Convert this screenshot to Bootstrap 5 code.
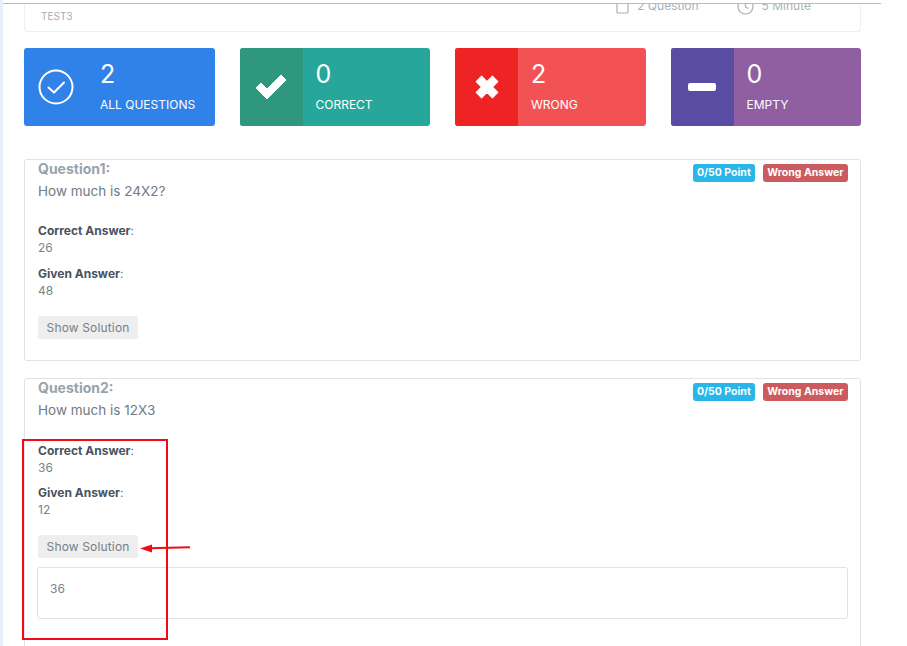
<!DOCTYPE html>
<html lang="en">
<head>
    <meta charset="UTF-8">
    <meta name="viewport" content="width=device-width, initial-scale=1.0">
    <title>Exam Result</title>
    <link href="https://cdn.jsdelivr.net/npm/bootstrap@5.3.0/dist/css/bootstrap.min.css" rel="stylesheet">
    <style>
        html, body {
            height: 646px;
            overflow: hidden;
        }
        body {
            background: #fff;
            font-family: Inter, "Open Sans", sans-serif;
            font-size: 13px;
            color: #6c757d;
            position: relative;
        }
        .side-strip {
            width: 3px;
            height: 646px;
            background: #e9effb;
            flex-shrink: 0;
        }
        .page-area {
            width: 878px;
            height: 646px;
            padding-top: 3px;
        }
        .top-rule {
            border-top: 1px solid #b9bbbd;
            height: 643px;
            overflow: hidden;
            padding: 0 20px 0 21px;
        }
        .exam-head {
            height: 28px;
            border: 1px solid #eceff3;
            border-top: 0;
            border-radius: 0 0 4px 4px;
            padding: 5px 49px 0 16px;
            font-size: 10px;
            color: #a5acb2;
        }
        .exam-meta {
            margin-top: -12px;
            font-size: 12px;
            color: #a9b1b7;
            line-height: 16px;
            gap: 38px;
        }
        .meta-item {
            gap: 8px;
            height: 18px;
        }
        .stat-row {
            margin-top: 16px;
            gap: 25px;
        }
        .stat-box {
            flex: 1 1 0;
            height: 78px;
            border-radius: 3px;
            color: #fff;
            overflow: hidden;
        }
        .stat-icon {
            width: 63px;
            flex-shrink: 0;
        }
        .stat-text {
            padding: 11px 0 0 13px;
        }
        .stat-num {
            font-size: 25px;
            line-height: 30px;
        }
        .stat-label {
            font-size: 12px;
            line-height: 16px;
            margin-top: 8px;
        }
        .tone-blue { background: #3082e8; }
        .tone-green { background: #27a79b; }
        .tone-green .stat-icon { background: #2e977d; }
        .tone-red { background: #f35254; }
        .tone-red .stat-icon { background: #ee2324; }
        .tone-purple { background: #8f5fa1; }
        .tone-purple .stat-icon { background: #5a4ca2; }
        .question-box {
            border: 1px solid #dde3ea;
            border-radius: 3px;
            padding: 0 12px 0 13px;
            background: #fff;
        }
        .q-first {
            margin-top: 33px;
            height: 202px;
        }
        .q-second {
            margin-top: 17px;
            height: 300px;
        }
        .q-title {
            font-size: 14px;
            line-height: 18px;
            font-weight: 700;
            color: #98a4aa;
        }
        .q-text {
            font-size: 13.5px;
            line-height: 20px;
            margin-top: -1px;
            margin-bottom: 21px;
            color: #6f7a82;
        }
        .q-second .q-text {
            margin-bottom: 22px;
        }
        .q-tags {
            padding-top: 4px;
            gap: 8px;
        }
        .q-tag {
            font-size: 10.5px;
            line-height: 18px;
            height: 18px;
            font-weight: 700;
            color: #fff;
            padding: 0 4px;
            border-radius: 3px;
        }
        .tag-info { background: #29b6e8; }
        .tag-danger { background: #cc5b60; padding: 0 4.5px; }
        .ans-label {
            font-size: 12px;
            line-height: 17px;
            color: #6f7a82;
        }
        .ans-label b {
            font-weight: 700;
            color: #47525e;
        }
        .ans-value {
            font-size: 12px;
            line-height: 17px;
            margin-bottom: 9px;
            color: #78838b;
        }
        .q-second .first-value {
            margin-bottom: 8px;
        }
        .ans-value.given-blue { color: #6f8296; }
        .btn-solution {
            background: #eeeeee;
            color: #767f86;
            font-size: 12px;
            letter-spacing: .15px;
            line-height: 16px;
            padding: 3px 8px;
            height: 23px;
            width: 100px;
            border: 0;
            border-radius: 2px;
            margin-top: 17px;
            display: block;
            white-space: nowrap;
        }
        .solution-box {
            margin-top: 9px;
            margin-left: -1px;
            height: 52px;
            border: 1px solid #dde3ea;
            border-radius: 3px;
            padding: 12px;
            font-size: 12px;
            line-height: 17px;
            color: #78838b;
        }
        .note-rect {
            position: absolute;
            left: 22px;
            top: 439px;
            width: 146px;
            height: 201px;
            border: 2px solid #f40a14;
        }
        .note-arrow {
            position: absolute;
            left: 138px;
            top: 542px;
        }
    </style>
</head>
<body>
    <div class="d-flex">
        <div class="side-strip"></div>
        <div class="page-area">
            <div class="top-rule">
                <div class="exam-head d-flex justify-content-between">
                    <div>TEST3</div>
                    <div class="exam-meta d-flex">
                        <span class="meta-item d-flex align-items-center">
                            <svg width="13" height="16" viewBox="0 0 13 16" fill="none" stroke="#a9b1b7" stroke-width="1.2"><rect x="1" y="1" width="11" height="14" rx="1"/></svg>
                            2 Question
                        </span>
                        <span class="meta-item d-flex align-items-center">
                            <svg width="17" height="17" viewBox="0 0 17 17" fill="none" stroke="#a9b1b7" stroke-width="1.2"><circle cx="8.5" cy="8.5" r="7.5"/><path d="M8.5 4v5l3 1.5"/></svg>
                            5 Minute
                        </span>
                    </div>
                </div>

                <div class="stat-row d-flex">
                    <div class="stat-box tone-blue d-flex">
                        <div class="stat-icon d-flex align-items-center justify-content-center">
                            <svg width="36" height="36" viewBox="0 0 36 36" fill="none" stroke="#fff" stroke-width="2"><circle cx="18" cy="18" r="16.5"/><path d="M10.5 18.5l5.5 5 10-10" stroke-linecap="round" stroke-linejoin="round"/></svg>
                        </div>
                        <div class="stat-text">
                            <div class="stat-num">2</div>
                            <div class="stat-label">ALL QUESTIONS</div>
                        </div>
                    </div>
                    <div class="stat-box tone-green d-flex">
                        <div class="stat-icon d-flex align-items-center justify-content-center">
                            <svg width="32" height="26" viewBox="0 0 32 26"><path d="M1 14l5-5 6 6L26 1l5 5-19 19z" fill="#fff" stroke="#fff" stroke-linejoin="round"/></svg>
                        </div>
                        <div class="stat-text">
                            <div class="stat-num">0</div>
                            <div class="stat-label">CORRECT</div>
                        </div>
                    </div>
                    <div class="stat-box tone-red d-flex">
                        <div class="stat-icon d-flex align-items-center justify-content-center">
                            <svg width="26" height="26" viewBox="0 0 24 24"><path d="M2 7l5-5 5 5 5-5 5 5-5 5 5 5-5 5-5-5-5 5-5-5 5-5z" fill="#fff" stroke="#fff" stroke-linejoin="round"/></svg>
                        </div>
                        <div class="stat-text">
                            <div class="stat-num">2</div>
                            <div class="stat-label">WRONG</div>
                        </div>
                    </div>
                    <div class="stat-box tone-purple d-flex">
                        <div class="stat-icon d-flex align-items-center justify-content-center">
                            <svg width="28" height="8" viewBox="0 0 28 8"><rect width="28" height="8" rx="2" fill="#fff"/></svg>
                        </div>
                        <div class="stat-text">
                            <div class="stat-num">0</div>
                            <div class="stat-label">EMPTY</div>
                        </div>
                    </div>
                </div>

                <div class="question-box q-first">
                    <div class="d-flex justify-content-between">
                        <div class="q-title">Question1:</div>
                        <div class="q-tags d-flex">
                            <span class="q-tag tag-info">0/50 Point</span>
                            <span class="q-tag tag-danger">Wrong Answer</span>
                        </div>
                    </div>
                    <div class="q-text">How much is 24X2?</div>
                    <div class="ans-label"><b>Correct Answer</b>:</div>
                    <div class="ans-value first-value">26</div>
                    <div class="ans-label"><b>Given Answer</b>:</div>
                    <div class="ans-value">48</div>
                    <button type="button" class="btn btn-solution">Show Solution</button>
                </div>

                <div class="question-box q-second">
                    <div class="d-flex justify-content-between">
                        <div class="q-title">Question2:</div>
                        <div class="q-tags d-flex">
                            <span class="q-tag tag-info">0/50 Point</span>
                            <span class="q-tag tag-danger">Wrong Answer</span>
                        </div>
                    </div>
                    <div class="q-text">How much is 12X3</div>
                    <div class="ans-label"><b>Correct Answer</b>:</div>
                    <div class="ans-value first-value">36</div>
                    <div class="ans-label"><b>Given Answer</b>:</div>
                    <div class="ans-value given-blue">12</div>
                    <button type="button" class="btn btn-solution">Show Solution</button>
                    <div class="solution-box">36</div>
                </div>
            </div>
        </div>
    </div>

    <div class="note-rect"></div>
    <svg class="note-arrow" width="54" height="12" viewBox="0 0 54 12">
        <path d="M52 5.2L12 6.2" stroke="#f40a14" stroke-width="2" fill="none"/>
        <path d="M2 6.5l12-4v8z" fill="#f40a14"/>
    </svg>

    <script src="https://cdn.jsdelivr.net/npm/bootstrap@5.3.0/dist/js/bootstrap.bundle.min.js"></script>
</body>
</html>
